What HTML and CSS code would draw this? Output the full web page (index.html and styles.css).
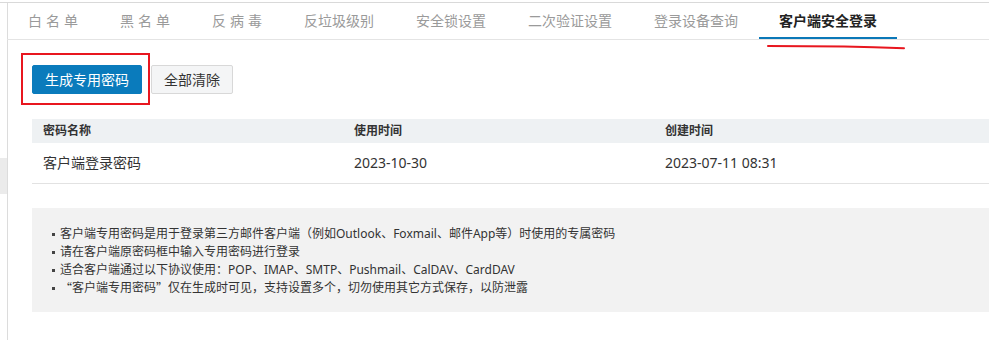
FILE: index.html
```html
<!DOCTYPE html>
<html lang="zh-CN">
<head>
<meta charset="utf-8">
<title>客户端安全登录</title>
<link rel="stylesheet" href="styles.css">
</head>
<body>
<div class="frame">
  <aside class="side"><div class="side-item"></div></aside>
  <main class="main">
    <nav class="tabs">
      <span class="tab"><span class="spaced">白名单</span></span>
      <span class="tab"><span class="spaced">黑名单</span></span>
      <span class="tab"><span class="spaced">反病毒</span></span>
      <span class="tab">反垃圾级别</span>
      <span class="tab">安全锁设置</span>
      <span class="tab">二次验证设置</span>
      <span class="tab">登录设备查询</span>
      <span class="tab active">客户端安全登录</span>
    </nav>
    <div class="toolbar">
      <button class="btn btn-primary">生成专用密码</button>
      <button class="btn btn-default">全部清除</button>
    </div>
    <div class="table">
      <div class="row head">
        <div class="cell">密码名称</div>
        <div class="cell">使用时间</div>
        <div class="cell">创建时间</div>
        <div class="cell"></div>
      </div>
      <div class="row body">
        <div class="cell">客户端登录密码</div>
        <div class="cell">2023-10-30</div>
        <div class="cell">2023-07-11 08:31</div>
        <div class="cell"></div>
      </div>
    </div>
    <div class="notice">
      <ul class="notice-list">
        <li>客户端专用密码是用于登录第三方邮件客户端（例如Outlook、Foxmail、邮件App等）时使用的专属密码</li>
        <li>请在客户端原密码框中输入专用密码进行登录</li>
        <li>适合客户端通过以下协议使用：POP、IMAP、SMTP、Pushmail、CalDAV、CardDAV</li>
        <li><span class="cjk">“</span>客户端专用密码<span class="cjk">”</span>仅在生成时可见，支持设置多个，切勿使用其它方式保存，以防泄露</li>
      </ul>
    </div>
    <div class="mark-box"></div>
    <svg class="mark-line" width="150" height="10" viewBox="0 0 150 10">
      <path d="M4 3 L80 3.4 Q110 3.8 140 5.2" fill="none" stroke="#e8161f" stroke-width="2" stroke-linecap="round"/>
    </svg>
  </main>
</div>
</body>
</html>
```

FILE: styles.css
```css
html, body {
  margin: 0;
  padding: 0;
  background: #fff;
  overflow: hidden;
}
body {
  font-family: "Noto Sans", "Noto Sans CJK SC", sans-serif;
  color: #333;
  width: 989px;
  height: 340px;
}
.frame {
  margin-top: 2px;
  border-top: 1px solid #d9d9d9;
  display: flex;
  height: 337px;
}
.side {
  width: 7px;
  flex: none;
}
.side-item {
  margin-top: 155px;
  height: 36px;
  background: #ebebeb;
}
.main {
  flex: 1;
  border-left: 1px solid #dcdcdc;
  position: relative;
  min-width: 0;
}
.tabs {
  display: flex;
  height: 36px;
  border-bottom: 1px solid #e4e4e4;
  margin-left: -1px;
}
.tab {
  box-sizing: border-box;
  height: 36px;
  line-height: 36px;
  padding: 0 21px;
  font-size: 14px;
  color: #9a9a9a;
  white-space: nowrap;
}
.spaced {
  letter-spacing: 4px;
  margin-right: -4px;
}
.tab.active {
  color: #222;
  font-weight: bold;
  border-bottom: 2px solid #0b78b8;
  line-height: 35px;
  padding: 0 20px;
}
.toolbar {
  display: flex;
  gap: 9px;
  padding: 25px 0 0 24px;
}
.btn {
  font-family: "Noto Sans", "Noto Sans CJK SC", sans-serif;
  font-size: 14px;
  height: 29px;
  padding: 0 12px;
  border-radius: 2px;
  cursor: pointer;
  line-height: 27px;
  white-space: nowrap;
}
.btn-primary {
  background: #0a7bbc;
  border: 1px solid #0a7bbc;
  color: #fff;
}
.btn-default {
  background: #f4f5f6;
  border: 1px solid #d8d8d8;
  color: #333;
}
.table {
  margin: 25px 0 0 24px;
}
.row {
  display: grid;
  grid-template-columns: 311px 311px 311px 1fr;
}
.row.head {
  height: 24px;
  background: #eef1f3;
  font-size: 12px;
  font-weight: bold;
  color: #333;
  line-height: 24px;
}
.row.body {
  height: 40px;
  line-height: 40px;
  font-size: 14px;
  color: #333;
  border-bottom: 1px solid #e2e2e2;
}
.cell {
  padding-left: 11px;
  white-space: nowrap;
}
.notice {
  margin: 24px 0 0 24px;
  background: #f2f2f2;
  padding: 17px 0 15px 20px;
}
.notice-list {
  list-style: none;
  margin: 0;
  padding: 0;
  font-size: 12px;
  line-height: 18px;
  color: #333;
}
.notice-list li {
  display: flex;
  align-items: center;
  white-space: nowrap;
}
.notice-list li::before {
  content: "";
  width: 3px;
  height: 3px;
  background: #444;
  margin-right: 5px;
  flex: none;
}
.cjk {
  font-family: "Noto Sans CJK SC", sans-serif;
}
.mark-box {
  position: absolute;
  left: 13px;
  top: 50px;
  width: 125px;
  height: 48px;
  border: 2px solid #e8161f;
}
.mark-line {
  position: absolute;
  left: 756px;
  top: 40px;
}
```
